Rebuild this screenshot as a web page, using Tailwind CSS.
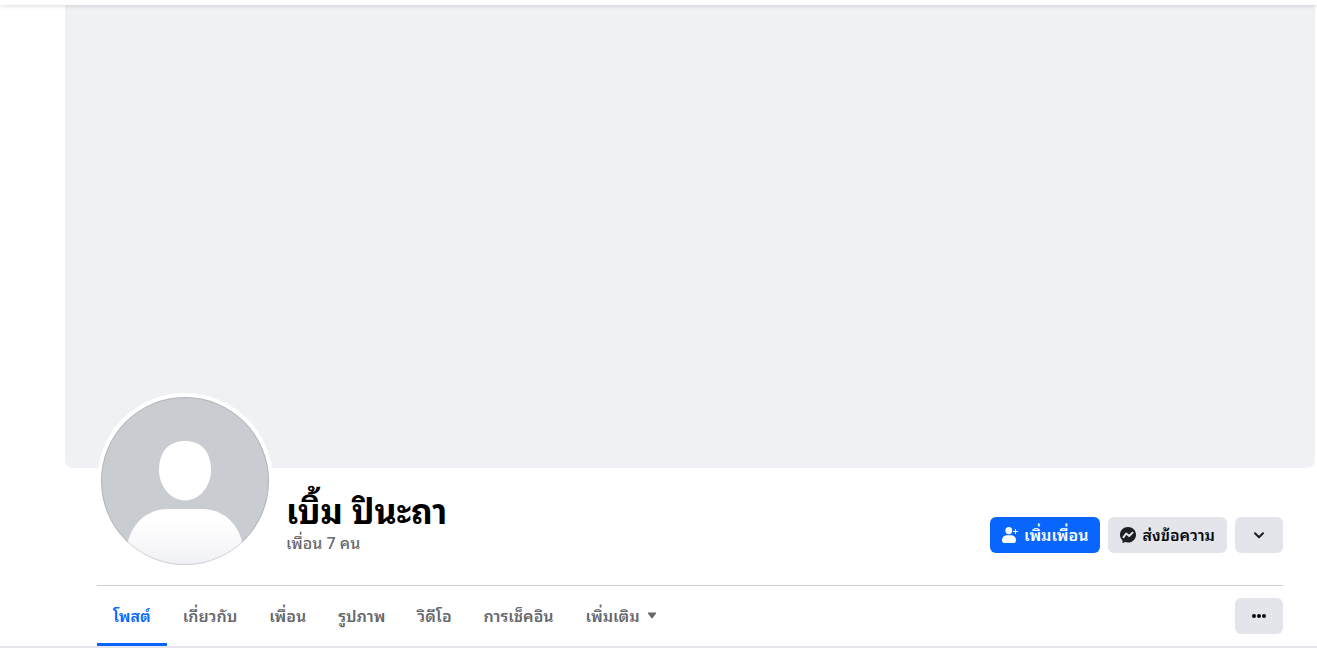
<!DOCTYPE html>
<html lang="th">
<head>
    <meta charset="UTF-8">
    <meta name="viewport" content="width=device-width, initial-scale=1.0">
    <title>เบิ้ม ปินะถา</title>
    <script src="https://cdn.jsdelivr.net/npm/@tailwindcss/browser@4"></script>
</head>
<body class="bg-white font-['Noto_Sans_Thai_Looped','Loma','Waree','Liberation_Sans',sans-serif] text-[#080809] overflow-x-hidden">
    <header class="relative z-10 h-[5px] bg-white shadow-[0_1px_4px_rgba(0,0,0,0.15)]"></header>
    <main class="border-b-2 border-[#e2e5eb]">
        <div class="ml-[65px] mr-[2px]">
            <div class="h-[463px] rounded-b-lg bg-[#f0f1f5]"></div>
            <div class="px-8">
                <!-- Profile header -->
                <section class="flex h-[117px] items-start justify-between">
                    <div class="flex items-start">
                        <div class="relative z-10 -mt-[75px] size-44 shrink-0 rounded-full bg-white p-1">
                            <svg class="size-[168px]" viewBox="0 0 168 168" role="img" aria-label="รูปโปรไฟล์">
                                <defs>
                                    <clipPath id="avatar"><circle cx="84" cy="84" r="84"/></clipPath>
                                    <linearGradient id="body" x1="0" y1="0" x2="0" y2="1">
                                        <stop offset="0.2" stop-color="#fff"/>
                                        <stop offset="1" stop-color="#f0f1f4"/>
                                    </linearGradient>
                                </defs>
                                <g clip-path="url(#avatar)">
                                    <rect width="168" height="168" fill="#c9ccd1"/>
                                    <path d="M84 44C100 44 110 54.500 110 73C110 89 98.500 103.500 84 103.500C69.500 103.500 58 89 58 73C58 54.500 68 44 84 44Z" fill="#fff"/>
                                    <path d="M26 150C29 128 45 112 67 112H101C123 112 139 128 142 150V168H26Z" fill="url(#body)"/>
                                </g>
                                <circle cx="84" cy="84" r="83.500" fill="none" stroke="#000" stroke-opacity="0.12"/>
                            </svg>
                        </div>
                        <div class="ml-[13px] mt-5">
                            <h1 class="text-[34px] leading-[42px] font-bold text-black">เบิ้ม ปินะถา</h1>
                            <a href="#" class="mt-[2px] block text-base leading-5 font-medium text-[#65686c]">เพื่อน 7 คน</a>
                        </div>
                    </div>
                    <div class="mt-[49px] flex gap-2 text-base leading-5 font-semibold">
                        <button type="button" class="flex h-9 items-center gap-[6px] rounded-md bg-[#0866ff] px-3 text-white">
                            <svg class="size-4" viewBox="0 0 16 16" fill="currentColor" aria-hidden="true">
                                <ellipse cx="6.800" cy="3.600" rx="3.400" ry="3.600"/>
                                <path d="M5 8.200H9C12 8.200 14 10.400 14 13C14 15 13.300 16 12 16H2C.7 16 0 15 0 13C0 10.400 2 8.200 5 8.200Z"/>
                                <path d="M13.500 2V7M11 4.500H16" stroke="currentColor" stroke-width="1"/>
                            </svg>
                            <span class="pb-[2px]">เพิ่มเพื่อน</span>
                        </button>
                        <button type="button" class="flex h-9 items-center gap-[6px] rounded-md bg-[#e3e5ea] px-3">
                            <svg class="size-4" viewBox="0 0 16 16" fill="#1c1e21" aria-hidden="true">
                                <path d="M8 0C3.500 0 0 3.300 0 7.800C0 10.100 1 12.100 2.500 13.500V15.500C2.500 15.900 2.900 16.100 3.200 15.900L5 15.100C6 15.400 7 15.600 8 15.600C12.500 15.600 16 12.300 16 7.800S12.500 0 8 0Z"/>
                                <path d="M3.500 10.200L6.200 6.500L9.200 9L12.500 5.600" fill="none" stroke="#e3e5ea" stroke-width="2" stroke-linejoin="round" stroke-linecap="round"/>
                            </svg>
                            <span class="pb-[2px]">ส่งข้อความ</span>
                        </button>
                        <button type="button" aria-label="ตัวเลือกอื่น" class="flex h-9 w-12 items-center justify-center rounded-md bg-[#e3e5ea]">
                            <svg class="size-4" viewBox="0 0 16 16" fill="none" stroke="#1c1e21" stroke-width="2" stroke-linecap="round" stroke-linejoin="round" aria-hidden="true">
                                <path d="M4 6.200L8 10.200L12 6.200"/>
                            </svg>
                        </button>
                    </div>
                </section>
                <!-- Tabs -->
                <div class="flex h-[61px] items-center justify-between border-t border-[#ced0d4]">
                    <nav class="flex h-full text-base leading-5 font-semibold text-[#65686c]">
                        <a href="#" aria-current="page" class="flex items-center border-b-3 border-[#0866ff] px-4 pt-[1px] text-[#0866ff]">โพสต์</a>
                        <a href="#" class="flex items-center px-4 pb-[2px]">เกี่ยวกับ</a>
                        <a href="#" class="flex items-center px-4 pb-[2px]">เพื่อน</a>
                        <a href="#" class="flex items-center px-4 pb-[2px]">รูปภาพ</a>
                        <a href="#" class="flex items-center px-4 pb-[2px]">วิดีโอ</a>
                        <a href="#" class="flex items-center px-4 pb-[2px]">การเช็คอิน</a>
                        <button type="button" class="flex items-center gap-[6px] px-4 pb-[2px]">
                            เพิ่มเติม
                            <svg class="size-3" viewBox="0 0 12 12" fill="currentColor" aria-hidden="true">
                                <path d="M2.500 3.500H9.500C10.200 3.500 10.300 4 10 4.500L6.700 9C6.300 9.400 5.700 9.400 5.300 9L2 4.500C1.700 4 1.800 3.500 2.500 3.500Z"/>
                            </svg>
                        </button>
                    </nav>
                    <button type="button" aria-label="เพิ่มเติม" class="flex h-9 w-12 items-center justify-center rounded-md bg-[#e3e5ea]">
                        <svg class="size-4" viewBox="0 0 16 16" fill="#080809" aria-hidden="true">
                            <circle cx="3" cy="8" r="2"/><circle cx="8" cy="8" r="2"/><circle cx="13" cy="8" r="2"/>
                        </svg>
                    </button>
                </div>
            </div>
        </div>
    </main>
</body>
</html>
